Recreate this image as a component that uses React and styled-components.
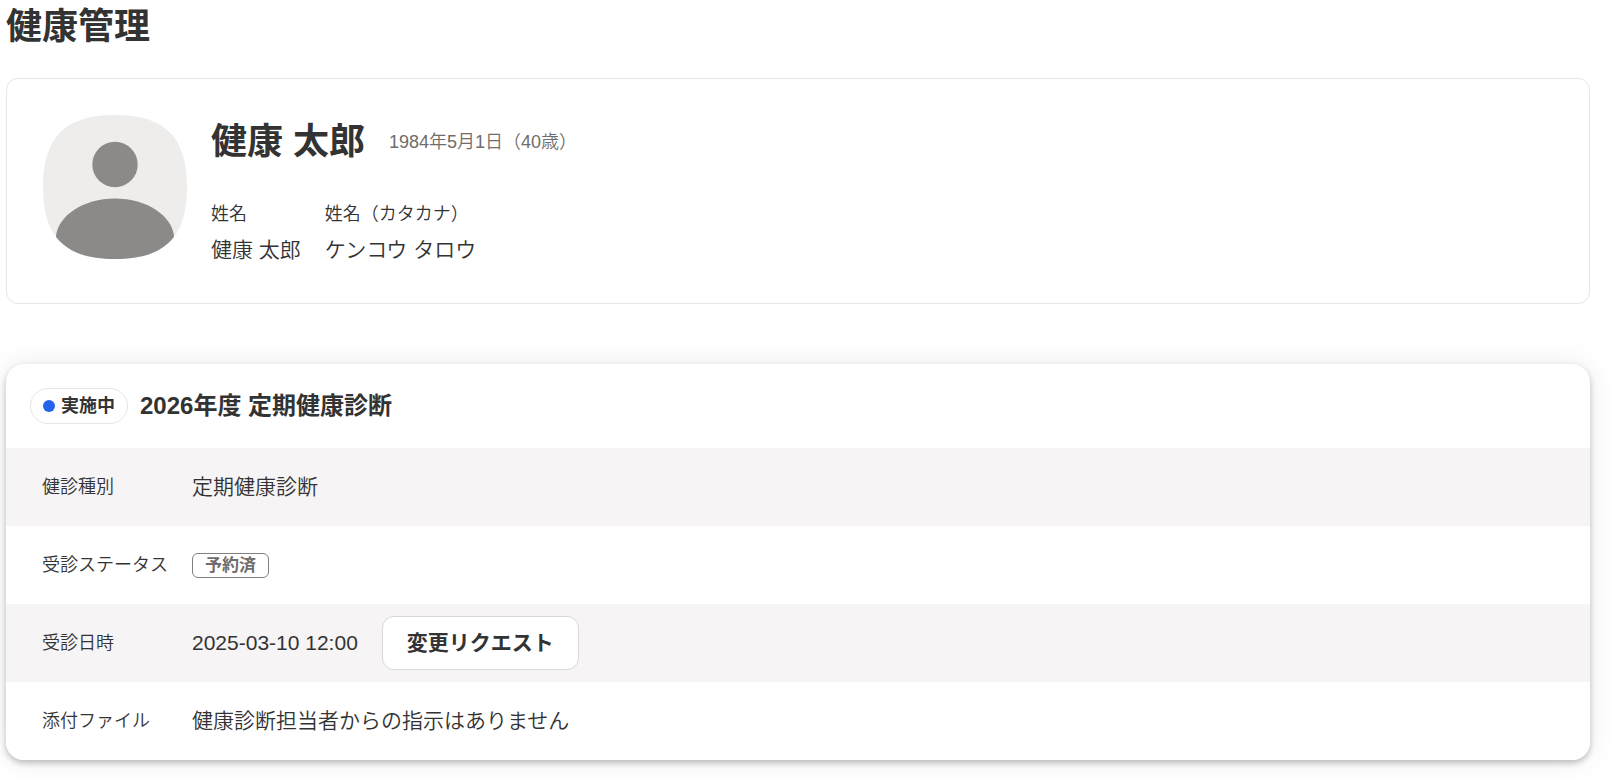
import styled, { createGlobalStyle } from 'styled-components'

const GlobalStyle = createGlobalStyle`
  *, *::before, *::after {
    box-sizing: border-box;
  }
  body {
    margin: 0;
    background-color: #fff;
    color: #333;
    font-family: "Liberation Sans", "Noto Sans CJK JP", sans-serif;
    font-size: 21px;
    font-weight: 350;
    line-height: 30px;
  }
  h1, h2, dl, dt, dd, p {
    margin: 0;
  }
`

const Page = styled.main`
  padding: 0 22px 20px 6px;
`

const PageTitle = styled.h1`
  font-size: 36px;
  line-height: 54px;
  margin-bottom: 24px;
`

const ProfileCard = styled.section`
  display: flex;
  align-items: flex-start;
  gap: 24px;
  padding: 36px;
  border: 1px solid #e6e6e6;
  border-radius: 12px;
  margin-bottom: 60px;
`

const AvatarSvg = styled.svg`
  width: 144px;
  height: 144px;
  flex-shrink: 0;
`

const ProfileBody = styled.div`
  display: flex;
  flex-direction: column;
  gap: 30px;
`

const NameLine = styled.div`
  display: flex;
  align-items: center;
  gap: 24px;
`

const Name = styled.h2`
  font-size: 36px;
  line-height: 54px;
`

const Birthday = styled.p`
  font-size: 18px;
  color: #706d6a;
`

const NameList = styled.dl`
  display: flex;
  gap: 24px;
`

const Term = styled.dt`
  font-size: 18px;
`

const NameItem = styled.div`
  display: flex;
  flex-direction: column;
  gap: 6px;
  padding-bottom: 2px;
`

const CheckupCard = styled.section`
  border-radius: 18px;
  background-color: #fff;
  overflow: hidden;
  box-shadow: 0 3px 6px rgba(0,0,0,0.24), 0 0 30px rgba(0,0,0,0.08);
`

const CheckupHeader = styled.div`
  display: flex;
  align-items: center;
  gap: 12px;
  padding: 24px;
`

const CheckupTitle = styled.h2`
  font-size: 24px;
  line-height: 36px;
`

const StateChip = styled.span`
  display: flex;
  align-items: center;
  gap: 6px;
  height: 36px;
  padding: 0 12px;
  border: 1px solid #e6e6e6;
  border-radius: 18px;
  font-size: 18px;
  font-weight: bold;
`

const Dot = styled.span`
  width: 12px;
  height: 12px;
  border-radius: 50%;
  background-color: ${props=>props.$color};
`

const Row = styled.div`
  display: grid;
  grid-template-columns: 126px 1fr;
  align-items: center;
  column-gap: 24px;
  min-height: 78px;
  padding: 12px 36px;
  background-color: #fff;
  &:nth-child(odd){
    background-color: #f6f4f5;
  }
`

const RowValue = styled.dd`
  display: flex;
  align-items: center;
  gap: 24px;
`

const StatusLabel = styled.span`
  padding: 0 12px;
  border: 1px solid #808080;
  border-radius: 6px;
  color: #706d6a;
  font-size: 17px;
  font-weight: bold;
  line-height: 23px;
`

const Button = styled.button`
  height: 54px;
  padding: 0 24px;
  border: 1px solid #d9d8d8;
  border-radius: 12px;
  background-color: #fff;
  color: inherit;
  font: inherit;
  font-weight: bold;
  cursor: pointer;
  &:hover{
    background-color: #f6f4f5;
  }
`

const rows = [
  { label: '健診種別', value: '定期健康診断' },
  { label: '受診ステータス', value: <StatusLabel>予約済</StatusLabel> },
  { label: '受診日時', value: <>2025-03-10 12:00<Button type="button">変更リクエスト</Button></> },
  { label: '添付ファイル', value: '健康診断担当者からの指示はありません' },
]

function Avatar() {
  return (
    <AvatarSvg viewBox="0 0 144 144" aria-hidden="true">
      <clipPath id="avatar-shape">
        <path d="M72 0C122 0 144 22 144 72S122 144 72 144 0 122 0 72 22 0 72 0Z" />
      </clipPath>
      <g clipPath="url(#avatar-shape)">
        <rect width="144" height="144" fill="#eeedec" />
        <circle cx="72" cy="49.5" r="22.7" fill="#8b8a88" />
        <path d="M13 121C15 101 40 83.5 72 83.5S129 101 131 121V144H13Z" fill="#8b8a88" />
      </g>
    </AvatarSvg>
  )
}

function App() {
  return (
    <>
      <GlobalStyle />
      <Page>
        <PageTitle>健康管理</PageTitle>
        <ProfileCard>
          <Avatar />
          <ProfileBody>
            <NameLine>
              <Name>健康 太郎</Name>
              <Birthday>1984年5月1日（40歳）</Birthday>
            </NameLine>
            <NameList>
              <NameItem>
                <Term>姓名</Term>
                <dd>健康 太郎</dd>
              </NameItem>
              <NameItem>
                <Term>姓名（カタカナ）</Term>
                <dd>ケンコウ タロウ</dd>
              </NameItem>
            </NameList>
          </ProfileBody>
        </ProfileCard>
        <CheckupCard>
          <CheckupHeader>
            <StateChip><Dot $color="#2563eb" />実施中</StateChip>
            <CheckupTitle>2026年度 定期健康診断</CheckupTitle>
          </CheckupHeader>
          <dl>
            {rows.map(row=>(
              <Row key={row.label}>
                <Term>{row.label}</Term>
                <RowValue>{row.value}</RowValue>
              </Row>
            ))}
          </dl>
        </CheckupCard>
      </Page>
    </>
  )
}

export default App
